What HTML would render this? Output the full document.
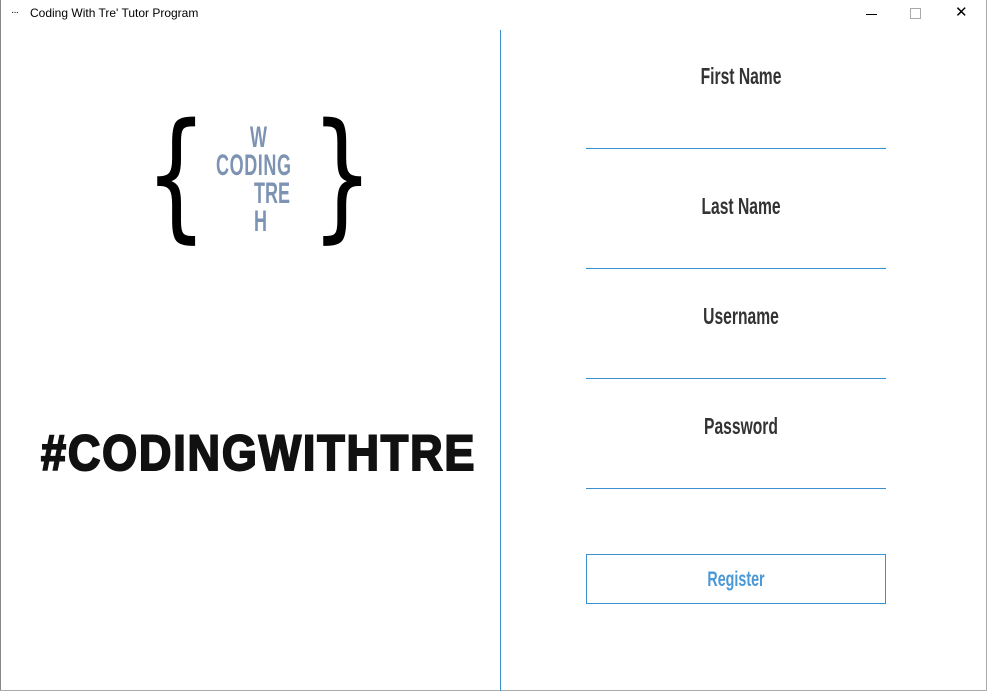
<!DOCTYPE html>
<html><head><style>
body{margin:0;width:987px;height:691px;background:#fff;position:relative;overflow:hidden;font-family:"Liberation Sans",sans-serif}
.a{position:absolute}
.lbl{position:absolute;left:586px;width:310px;text-align:center;font-weight:bold;font-size:23px;color:#333;transform:scaleX(.68);transform-origin:155px 0}
.ln{position:absolute;left:586px;width:300px;height:1px;background:#3a8fd0}
</style></head><body>
<div class="a" style="left:0;top:0;width:1px;height:691px;background:#888"></div>
<div class="a" style="right:0;top:0;width:1px;height:691px;background:#aaa"></div>
<div class="a" style="left:0;bottom:0;width:987px;height:1px;background:#aaa"></div>
<div class="a" style="left:11px;top:7px;font-size:10px;letter-spacing:-1px">···</div>
<div class="a" style="left:30px;top:6px;font-size:12px;color:#000">Coding With Tre' Tutor Program</div>
<div class="a" style="left:866px;top:14px;width:11px;height:1px;background:#000"></div>
<div class="a" style="left:910px;top:8px;width:9px;height:9px;border:1px solid #aaa"></div>
<div class="a" style="left:955px;top:3px;font-size:15px;color:#000">✕</div>
<div class="a" style="left:500px;top:30px;width:1px;height:661px;background:#3a8fd0"></div>

<div class="a" style="left:145px;top:106px;font-size:140px;line-height:140px;font-family:'DejaVu Sans',sans-serif;transform:scaleX(.7);transform-origin:0 0">{</div>
<div class="a" style="left:311px;top:106px;font-size:140px;line-height:140px;font-family:'DejaVu Sans',sans-serif;transform:scaleX(.7);transform-origin:0 0">}</div>
<div class="a" style="left:200px;top:124px;width:120px;color:#7d93b3;font-weight:bold;font-size:30px;line-height:28px;">
<div style="position:absolute;left:50px;top:0;transform:scaleX(.6);transform-origin:0 0">W</div>
<div style="position:absolute;left:16px;top:28px;transform:scaleX(.6);transform-origin:0 0;letter-spacing:1px">CODING</div>
<div style="position:absolute;left:54px;top:56px;transform:scaleX(.6);transform-origin:0 0">TRE</div>
<div style="position:absolute;left:54px;top:84px;transform:scaleX(.6);transform-origin:0 0">H</div>
</div>
<div class="a" style="left:41px;top:425px;font-size:50px;line-height:56px;font-weight:900;color:#111;transform:scaleX(.9);transform-origin:0 0;letter-spacing:2px;-webkit-text-stroke:2px #111">#CODINGWITHTRE</div>

<div class="lbl" style="top:63px">First Name</div>
<div class="ln" style="top:148px"></div>
<div class="lbl" style="top:193px">Last Name</div>
<div class="ln" style="top:268px"></div>
<div class="lbl" style="top:303px">Username</div>
<div class="ln" style="top:378px"></div>
<div class="lbl" style="top:413px">Password</div>
<div class="ln" style="top:488px"></div>
<div class="a" style="left:586px;top:554px;width:298px;height:48px;border:1px solid #3a8fd0"></div>
<div class="lbl" style="top:568px;left:581px;color:#4a98d6;font-size:21px">Register</div>
</body></html>
